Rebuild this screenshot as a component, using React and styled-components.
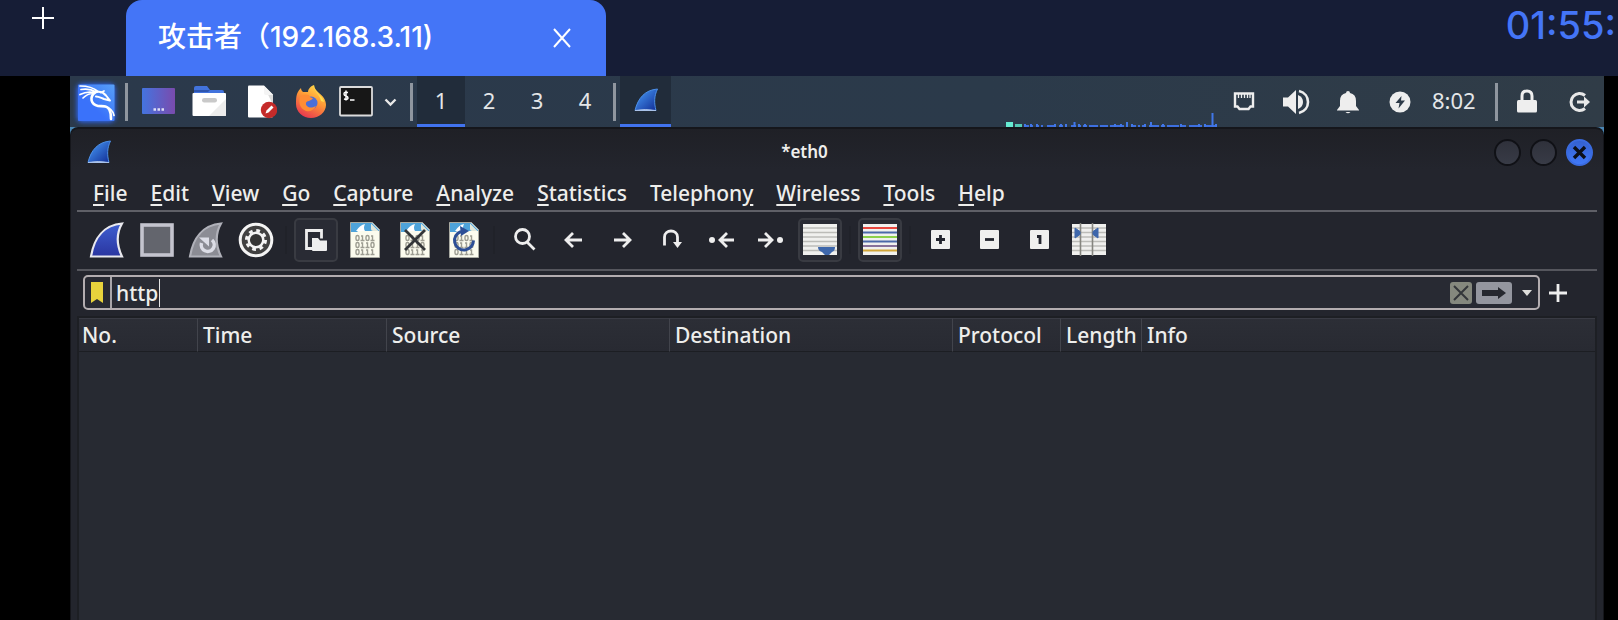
import React from "react";
import styled, { createGlobalStyle } from "styled-components";

const GlobalStyle = createGlobalStyle`
  * { box-sizing: border-box; }
  body { margin: 0; background: #000; overflow: hidden; }
  button { appearance: none; border: 0; padding: 0; margin: 0; background: none; color: inherit; font: inherit; }
  svg { display: block; flex: none; }
`;

const ui = `"Noto Sans", "Open Sans", sans-serif`;

const Page = styled.div`
  min-height: 100vh;
  display: flex;
  flex-direction: column;
  background: #000;
`;

/* Session bar */
const SessionBar = styled.header`
  height: 76px;
  display: flex;
  align-items: stretch;
  background: #161d36;
  font-family: Inter, "Noto Sans CJK SC", sans-serif;
  font-weight: 500;
  color: #fff;
`;
const AddSession = styled.button`
  width: 126px;
  padding: 6px 0 0 31px;
  display: flex;
  align-items: flex-start;
`;
const SessionTab = styled.div`
  width: 480px;
  display: flex;
  align-items: center;
  justify-content: space-between;
  padding: 0 34px 2px 32px;
  border-radius: 16px 16px 0 0;
  background: #4475f7;
  font-size: 28px;
  line-height: 40px;
  white-space: nowrap;
`;
const CloseTab = styled.button`
  padding-top: 2px;
`;
const Timer = styled.time`
  margin-left: auto;
  padding-right: 2px;
  font-size: 38px;
  line-height: 50px;
  color: #4475f7;
  white-space: nowrap;
`;

/* Remote desktop */
const Desktop = styled.main`
  flex: 1;
  display: flex;
  flex-direction: column;
  margin: 0 14px 0 70px;
  background: #4a86b4;
  font-family: ${ui};
`;
const Panel = styled.div`
  height: 51px;
  display: flex;
  align-items: stretch;
  background: linear-gradient(90deg, #2b394b, #2b3a4a 60%, #303c47);
  color: #e4e6e8;
`;
const PanelButton = styled.button`
  width: ${(p) => p.$w || 50}px;
  display: flex;
  align-items: center;
  justify-content: ${(p) => p.$align || "center"};
  font-size: 22px;
  line-height: 48px;
  background: ${(p) => (p.$active ? "#212c3a" : "none")};
  border-bottom: ${(p) => (p.$active ? "3px solid #4173ee" : "0")};
  padding-bottom: ${(p) => (p.$active || p.$flat ? 0 : 3)}px;
`;
const PanelRule = styled.span`
  width: 3px;
  margin: 7px 4px 6px;
  background: #8f969f;
`;
const Tray = styled.div`
  margin-left: auto;
  display: flex;
  align-items: stretch;
`;
const Load = styled.div`
  width: 212px;
  display: flex;
  align-items: flex-end;
`;
const Clock = styled.time`
  width: 65px;
  padding-left: 6px;
  font-size: 22px;
  line-height: 48px;
`;

/* Capture window */
const Window = styled.section`
  flex: 1;
  display: flex;
  flex-direction: column;
  padding: 0 6px;
  border: solid #15161b;
  border-width: 2px 1px 0;
  border-radius: 8px 8px 0 0;
  background: linear-gradient(#1f2026, #23252d 40px);
  color: #eeeeec;
`;
const TitleBar = styled.div`
  height: 46px;
  display: flex;
  align-items: center;
  padding: 0 4px 0 10px;
`;
const Title = styled.h1`
  flex: 1;
  margin: 0;
  padding-left: 4px;
  text-align: center;
  font-size: 17px;
  line-height: 24px;
  font-weight: 600;
`;
const Controls = styled.div`
  display: flex;
  gap: 9px;
`;
const Control = styled.button`
  width: 27px;
  height: 27px;
  display: flex;
  align-items: center;
  justify-content: center;
  border-radius: 50%;
  border: 2px solid ${(p) => (p.$close ? "#3a6bdf" : "#101116")};
  background: ${(p) => (p.$close ? "linear-gradient(#3561cf, #4079f8)" : "linear-gradient(#2f313b, #383b46)")};
`;
const MenuBar = styled.nav`
  height: 37px;
  display: flex;
  gap: 23px;
  padding: 0 16px;
  border-bottom: 2px solid #5f6067;
`;
const MenuItem = styled.button`
  font-size: 21px;
  line-height: 34px;
  font-weight: 500;
`;
const Mnemonic = styled.span`
  text-decoration: underline;
  text-decoration-thickness: 2px;
  text-underline-offset: 3px;
`;
const Toolbar = styled.div`
  height: 59px;
  display: flex;
  align-items: center;
  padding: 0 8px 2px;
  border-bottom: 2px solid #55565d;
`;
const ToolGroup = styled.div`
  width: ${(p) => p.$w}px;
  display: flex;
  justify-content: space-between;
`;
const ToolRule = styled.span`
  width: 2px;
  height: 28px;
  margin: 0 7px;
  background: #202229;
`;
const Tool = styled.button`
  width: 44px;
  height: 44px;
  display: flex;
  align-items: center;
  justify-content: center;
  border-radius: 5px;
  border: 2px solid ${(p) => (p.$on ? "#393b42" : "transparent")};
  background: ${(p) => (p.$on ? "#292b34" : "none")};
`;
const FilterRow = styled.form`
  display: flex;
  align-items: center;
  gap: 8px;
  padding: 4px 29px 6px 6px;
`;
const FilterBox = styled.div`
  flex: 1;
  height: 35px;
  display: flex;
  align-items: center;
  border: 2px solid #b3adb0;
  border-radius: 5px;
  background: #282a33;
`;
const Bookmark = styled.button`
  width: 27px;
  height: 31px;
  padding-right: 1px;
  display: flex;
  align-items: center;
  justify-content: center;
  border-right: 2px solid #a9a6aa;
`;
const FilterInput = styled.input`
  field-sizing: content;
  padding: 0 1px 0 4px;
  border: 0;
  outline: 0;
  background: none;
  color: #eeeeec;
  font: 500 21px/30px ${ui};
`;
const Caret = styled.span`
  width: 1px;
  height: 28px;
  background: #e6e6e6;
`;
const FilterActions = styled.div`
  margin-left: auto;
  display: flex;
  align-items: center;
  gap: 4px;
`;
const FilterButton = styled.button`
  width: ${(p) => p.$w}px;
  height: 22px;
  display: flex;
  align-items: center;
  justify-content: center;
  border-radius: 3px;
  background: ${(p) => p.$bg || "none"};
`;
const PacketPane = styled.div`
  flex: 1;
  border: 2px solid #1d1f24;
  border-bottom: 0;
  background: #272a32;
`;
const PacketTable = styled.table`
  width: 100%;
  table-layout: fixed;
  border-collapse: separate;
  border-spacing: 0;
`;
const Column = styled.col`
  width: ${(p) => (p.$w ? `${p.$w}px` : "auto")};
`;
const HeadCell = styled.th`
  height: 34px;
  padding: 0 0 0 ${(p) => (p.$first ? 3 : 5)}px;
  border-top: 1px solid #393b44;
  border-bottom: 1px solid #1c1e23;
  border-right: ${(p) => (p.$last ? "0" : "1px solid #42444c")};
  background: linear-gradient(#2c2e36, #282a32);
  text-align: left;
  font-size: 21px;
  line-height: 32px;
  font-weight: 500;
  white-space: nowrap;
`;

/* Icons */
const Kali = () => (
  <svg width="50" height="50" viewBox="0 0 50 50">
    <defs>
      <linearGradient id="kali" x1="0" y1="1" x2="1" y2="0"><stop offset=".4" stopColor="#3a72fa" /><stop offset="1" stopColor="#58a0f8" /></linearGradient>
      <filter id="glow" x="-30%" y="-30%" width="160%" height="160%"><feGaussianBlur stdDeviation="2.5" /></filter>
    </defs>
    <rect x="6" y="7" width="38" height="38" rx="5" fill="#2f6bff" filter="url(#glow)" />
    <rect x="7" y="7.500" width="36.500" height="36.500" rx="1" fill="url(#kali)" />
    <g fill="none" stroke="#fff" strokeLinecap="round" strokeLinejoin="round">
      <path d="M9 9c7 0 14 2 18 5.500M10 12.500c6-1 11 0 15 2.500M9 17.500c5-2.500 9-3 14-2M12 21c3-3 6-4.500 10-4.500" strokeWidth="1.700" />
      <path d="M24 15.500c-6 5-4 12 3 13.500 5 .5 9-1 11.500 4 1.500 3 1.500 6 1.500 9" strokeWidth="2.600" />
      <path d="M24 15.500c4-1.500 8-.5 11 3l4 5-6-1.500c-3-1-5-2.500-8-2.500" strokeWidth="2" />
      <path d="M30 15.500l3-1.500M34 29.500c4 1 8 4 9 9" strokeWidth="1.700" />
    </g>
  </svg>
);
const DesktopIcon = () => (
  <svg width="40" height="39" viewBox="-1 0 40 39">
    <defs><linearGradient id="desk"><stop stopColor="#4474e0" /><stop offset="1" stopColor="#7a4bad" /></linearGradient></defs>
    <rect x="4" y="6" width="33" height="26" rx="1" fill="url(#desk)" />
    <path d="M15.500 27.500h2.500M19.500 27.500h2.500M23.500 27.500h2.500" stroke="#dfe0f5" strokeWidth="2.500" />
  </svg>
);
const FolderIcon = () => (
  <svg width="40" height="39" viewBox="-1 1 40 39">
    <path d="M6 7q0-2 2-2h11l3 4h12q2 0 2 2v4H6z" fill="#4273dd" />
    <path d="M6 9h16l-2 2H6z" fill="#2e55ae" />
    <rect x="4.500" y="12" width="33.500" height="23" rx="1" fill="#fff" />
    <path d="M38 18v16q0 1-1 1H21z" fill="#ececec" />
    <rect x="14" y="17" width="15" height="4.500" rx="2.200" fill="#c9c9c9" />
  </svg>
);
const EditorIcon = () => (
  <svg width="40" height="39" viewBox="-1 0 40 39">
    <path d="M11 3.500h15l9 9V34q0 1.500-1.500 1.500H11q-1 0-1-1V4.500q0-1 1-1z" fill="#fff" />
    <path d="M26 4l9 9v10z" fill="#dadada" /><path d="M26 4l9 9h-7q-2 0-2-2z" fill="#f4f4f4" />
    <circle cx="31" cy="28" r="8.200" fill="#c52b2a" />
    <path d="M27.500 31.500l1-3 5-5 2 2-5 5z" fill="#fff" />
  </svg>
);
const FirefoxIcon = () => (
  <svg width="40" height="39" viewBox="-1 0 40 39">
    <defs>
      <linearGradient id="fox" x1=".8" y1="0" x2=".3" y2="1"><stop stopColor="#ffe14c" /><stop offset=".45" stopColor="#ff9a36" /><stop offset="1" stopColor="#e8364f" /></linearGradient>
    </defs>
    <path d="M9 12c1-3 3-5 4-6 0 2 1 3 2 4h5c0-3 3-6 6-7 0 3 2 5 5 8 4 3 7 7 7 12 0 7-7 13-15 13S8 30 8 22c0-4 0-7 1-10z" fill="url(#fox)" />
    <circle cx="23" cy="21" r="6.500" fill="#4a6fd8" />
    <path d="M12 15c3-3 6-3 9-2 0 2 2 3 4 3-1 2-3 2-4 3-3 0-4 3-2 5 3 3 7 1 9 0-2 4-6 6-10 5-5-2-8-7-6-14z" fill="#ff8d35" />
    <path d="M26 3c-1 6 6 9 7 16l3 1c0-5-10-9-10-17z" fill="#ffe04f" />
  </svg>
);
const TerminalIcon = () => (
  <svg width="40" height="39" viewBox="0 0 40 39">
    <rect x="3" y="5" width="32" height="28.500" rx="1" fill="#171717" stroke="#dcdcdc" strokeWidth="1.800" />
    <path d="M11 10.500q-4-1-4 1.500 0 1.500 2 2t2 2q0 2-4 1M9 8.500v10M13 18h4.500" fill="none" stroke="#fff" strokeWidth="1.500" />
  </svg>
);
const Chevron = () => (
  <svg width="16" height="16" viewBox="0 0 16 16"><path d="M3.500 5.500l5 5 5-5" fill="none" stroke="#e8e8e8" strokeWidth="2.400" /></svg>
);
const SmallFin = () => (
  <svg width="24" height="24" viewBox="0 0 24 24">
    <defs><linearGradient id="fin" x1="0" y1="0" x2="1" y2="1"><stop offset=".2" stopColor="#3f8ae8" /><stop offset="1" stopColor="#102a92" /></linearGradient></defs>
    <path d="M1 22.500C4 10 11 2 23.500 1 20 8 20 15 22 22.500z" fill="url(#fin)" stroke="#4c8fe6" />
    <path d="M1 22.500q10-2 21 0z" stroke="#a9c2ea" fill="#a9c2ea" />
  </svg>
);
const Network = () => (
  <svg width="24" height="24" viewBox="0 0 24 24"><path d="M3 3.500h18v13h-2.500l-2 2.500h-9l-2-2.500H3z" fill="none" stroke="#eee" strokeWidth="2.400" /><path d="M6.500 4v4M9.500 4v4M12.500 4v4M15.500 4v4M18 4v4" stroke="#eee" strokeWidth="1.300" /></svg>
);
const Volume = () => (
  <svg width="28" height="26" viewBox="0 0 28 26"><path d="M1 8.500h5l8-7.500v24l-8-7.500H1z" fill="#eee" /><path d="M16 6q5 2 5 7t-5 7z" fill="#eee" /><path d="M17 2c12 3 12 19 0 22" fill="none" stroke="#eee" strokeWidth="2.600" /></svg>
);
const Bell = () => (
  <svg width="24" height="26" viewBox="0 0 24 26"><path d="M12 2q2 0 2 2 6 1 6 8v5l3 4v.5H1V21l3-4v-5q0-7 6-8 0-2 2-2zM9.500 23h5q-2.500 2.500-5 0z" fill="#eee" /></svg>
);
const Power = () => (
  <svg width="24" height="24" viewBox="0 0 24 24"><circle cx="12" cy="12" r="10.500" fill="#eee" /><path d="M13.500 6l-6 7h4l-1 5.500 6.500-8h-4z" fill="#2d3a48" /></svg>
);
const Lock = () => (
  <svg width="24" height="26" viewBox="1 1 24 26"><rect x="2" y="12" width="20" height="12.500" rx="1.500" fill="#eee" /><path d="M7 13V8q0-5 5-5t5 5v5" fill="none" stroke="#eee" strokeWidth="3" /></svg>
);
const Logout = () => (
  <svg width="24" height="24" viewBox="0 0 24 24"><path d="M18 5.500a8.500 8.500 0 1 0 0 13" fill="none" stroke="#e8e8e8" strokeWidth="3" /><path d="M10 12h8" stroke="#e8e8e8" strokeWidth="3" /><path d="M17 6.500l6 5.500-6 5.500z" fill="#e8e8e8" /></svg>
);
const LoadGraph = () => (
  <svg width="212" height="18" viewBox="0 0 212 18">
    <path d="M0 13h7v5H0z" fill="#66ebd2" /><path d="M9 15h7v3H9z" fill="#54c9b4" />
    <path d="M19 17h4M25 17h2M30 17h3M35 17h2M41 17h9M53 17h4M59 17h2M65 17h5M72 17h3M77 17h4M83 17h9M94 17h8M104 17h14M120 17h2M126 17h4M132 17h2M136 17h4M143 17h10M155 17h4M161 17h12M175 17h5M183 17h13M198 17h12" stroke="#3d6fe0" strokeWidth="2" />
    <path d="M19 15v3M25 15v3M31 15v3M49 15v3M55 15v3M60 15v3M68.500 13v5M73 15v3M79 15v3M109 15v3M115 15v3M121 13v5M126 15v3M139 15v3M145 13v5M157 15v3M175 15v3M193 15v3M199 15v3M206.500 4v14M210 15v3" stroke="#4177e8" strokeWidth="2" />
  </svg>
);
const Fin = ({ restart }) => (
  <svg width="38" height="40" viewBox="0 0 38 40">
    <defs><linearGradient id="bigfin" x1="0" y1="0" x2="0" y2="1"><stop stopColor="#3f5fd0" /><stop offset="1" stopColor="#2a35a0" /></linearGradient></defs>
    <path d="M3 36.500C6 18 16 5 34 3.500 28 14 29 26 34 36.500z" fill={restart ? "#8b8c94" : "url(#bigfin)"} stroke={restart ? "#b0b1b9" : "#e9e9ee"} strokeWidth="2.200" />
    {restart && (
      <g fill="none" stroke="#dcdde6" strokeWidth="3.500"><path d="M25 20a6.500 6.500 0 1 1-10.500 3" /><path d="M12 17.500h10v9z" fill="#dcdde6" stroke="none" /></g>
    )}
  </svg>
);
const Stop = () => (
  <svg width="36" height="36" viewBox="0 0 36 36"><rect x="3" y="3" width="30" height="30" fill="#63656d" stroke="#c4c4ce" strokeWidth="3.600" /></svg>
);
const Options = () => (
  <svg width="36" height="36" viewBox="0 0 36 36">
    <circle cx="18" cy="18" r="15.800" fill="#414141" stroke="#f4f4f4" strokeWidth="3" />
    <circle cx="18" cy="18" r="9.500" fill="none" stroke="#f4f4f4" strokeWidth="3" strokeDasharray="3.730 3.730" />
    <circle cx="18" cy="18" r="7.300" fill="#353535" stroke="#f4f4f4" strokeWidth="2.500" />
  </svg>
);
const OpenFile = () => (
  <svg width="24" height="24" viewBox="0 0 24 24"><path d="M8.500 20.500h-6v-18h15v8" fill="none" stroke="#eee" strokeWidth="2.800" /><path d="M8 10h6l2 2.500h7V22q0 1-1 1H9q-1 0-1-1z" fill="#eee" /></svg>
);
const bits = ["0101", "0110", "0111"];
const Sheet = ({ mark }) => (
  <svg width="32" height="38" viewBox="0 0 32 38">
    <path d="M1.500 1.500h22l7 7v28h-29z" fill="#fbfbee" stroke="#a9aaa2" />
    <path d="M2 2h21l7 7v1H15l-3-3-4 4H2z" fill="#4ea3da" />
    <path d="M7 10q4-6 9-7-2 4 0 7z" fill="#fff" /><path d="M22 2.500l7.500 7.500H24q-2 0-2-2z" fill="#e2e7da" />
    {bits.map((row, r) =>
      [...row].map((bit, c) =>
        bit === "0" ? (
          <rect key={c} x={7 + c * 5} y={14.500 + r * 7} width="3" height="5" rx="1.500" fill="none" stroke="#9d9d92" strokeWidth="1.400" />
        ) : (
          <path key={c} d={`M${7 + c * 5} ${15 + r * 7}h1.500v4M${6.500 + c * 5} ${19.500 + r * 7}h4`} fill="none" stroke="#9d9d92" strokeWidth="1.400" />
        )
      )
    )}
    {mark === "close" && <path d="M6 9l20 20M26 9L6 29" stroke="#333639" strokeWidth="2.800" />}
    {mark === "reload" && (
      <g><path d="M13 10.500a9.500 9.500 0 1 0 12.500 9" fill="none" stroke="#2d4f96" strokeWidth="3" /><path d="M12 5l9 5-8 5z" fill="#2d4f96" /></g>
    )}
  </svg>
);
const lineIcons = {
  find: { d: "M18.500 9.500a7 7 0 1 1-14 0 7 7 0 0 1 14 0zM16 15l7.500 7.500" },
  back: { d: "M22 13H6M13 6l-7 7 7 7" },
  forward: { d: "M4 13h16M13 6l7 7-7 7" },
  jump: { d: "M5.500 18.500V10c0-8 13-8 13 0v8", fill: "M14 15h9l-4.500 6z" },
  first: { d: "M26 13H12M19 6l-7 7 7 7", fill: "M1 13a3 3 0 1 1 6 0 3 3 0 0 1-6 0" },
  last: { d: "M0 13h13M7 6l7 7-7 7", fill: "M19 13a3 3 0 1 1 6 0 3 3 0 0 1-6 0" },
};
const LineIcon = ({ name }) => (
  <svg width="26" height="26" viewBox="0 0 26 26">
    <path d={lineIcons[name].d} fill="none" stroke="#eee" strokeWidth="2.800" />
    {lineIcons[name].fill && <path d={lineIcons[name].fill} fill="#eee" />}
  </svg>
);
const Lines = ({ kind }) => {
  const colours = kind === "colour" ? ["#e8473f", "#4a68a8", "#8cd04a", "#4a68a8", "#87719a", "#d0a53a"] : Array(6).fill("#bcbcb8");
  return (
    <svg width="36" height="36" viewBox="0 0 36 36">
      <rect x="1" y="2" width="34" height="31" fill="#f0f0ee" />
      {colours.map((c, i) => (
        <path key={i} d={`M1 ${6 + i * 4.500}h34`} stroke={c} strokeWidth={kind === "colour" ? 2 : 1.600} />
      ))}
      {kind === "scroll" && <path d="M16 25h17q0 4-3 5l-3 3h-4l-3-3q-4-1-4-5z" fill="#3e67ab" />}
      {kind === "resize" && (
        <g><path d="M9.500 1v33M21.500 1v33" stroke="#85857f" strokeWidth="1.600" /><path d="M4 6l5 3.500v3L4 16zM27 6l-5 3.500v3l5 3.500z" fill="#3e67ab" stroke="#3e67ab" /></g>
      )}
    </svg>
  );
};
const zooms = { in: "M5 9.500h9M9.500 5v9", out: "M5 9.500h9", normal: "M7 6.500h3V14" };
const Zoom = ({ kind }) => (
  <svg width="19" height="19" viewBox="0 0 19 19"><rect width="19" height="19" rx="1" fill="#f0f0ee" /><path d={zooms[kind]} fill="none" stroke="#23252d" strokeWidth="2.800" /></svg>
);

const launchers = [
  ["Show desktop", DesktopIcon],
  ["File manager", FolderIcon],
  ["Text editor", EditorIcon],
  ["Firefox", FirefoxIcon],
  ["Terminal", TerminalIcon],
];
const trayIcons = [["Network", Network], ["Volume", Volume], ["Notifications", Bell], ["Power", Power]];
const menus = [
  ["", "F", "ile"], ["", "E", "dit"], ["", "V", "iew"], ["", "G", "o"], ["", "C", "apture"], ["", "A", "nalyze"],
  ["", "S", "tatistics"], ["Telephon", "y", ""], ["", "W", "ireless"], ["", "T", "ools"], ["", "H", "elp"],
];
const toolGroups = [
  { w: 193, tools: [["Start capture", <Fin />], ["Stop capture", <Stop />], ["Restart capture", <Fin restart />], ["Capture options", <Options />]] },
  { w: 192, tools: [["Open", <OpenFile />, true], ["Save", <Sheet />], ["Close file", <Sheet mark="close" />], ["Reload", <Sheet mark="reload" />]] },
  {
    w: 340,
    tools: [
      ["Find packet", <LineIcon name="find" />], ["Previous packet", <LineIcon name="back" />], ["Next packet", <LineIcon name="forward" />],
      ["Go to packet", <LineIcon name="jump" />], ["First packet", <LineIcon name="first" />], ["Last packet", <LineIcon name="last" />],
      ["Auto scroll", <Lines kind="scroll" />, true],
    ],
  },
  { w: 44, tools: [["Colorize", <Lines kind="colour" />, true]] },
  { w: 193, tools: [["Zoom in", <Zoom kind="in" />], ["Zoom out", <Zoom kind="out" />], ["Normal size", <Zoom kind="normal" />], ["Resize columns", <Lines kind="resize" />]] },
];
const columns = [["No.", 119], ["Time", 189], ["Source", 283], ["Destination", 283], ["Protocol", 108], ["Length", 81], ["Info", 0]];

export default function App() {
  const [filter, setFilter] = React.useState("http");
  return (
    <Page>
      <GlobalStyle />
      <SessionBar>
        <AddSession aria-label="New session">
          <svg width="24" height="24" viewBox="0 0 24 24"><path d="M1 12h22M12 1v22" stroke="#fff" strokeWidth="2" /></svg>
        </AddSession>
        <SessionTab>
          <span>攻击者（192.168.3.11)</span>
          <CloseTab aria-label="Close session">
            <svg width="20" height="20" viewBox="0 0 20 20"><path d="M2 1l16 18M18 1L2 19" stroke="#fff" strokeWidth="2" /></svg>
          </CloseTab>
        </SessionTab>
        <Timer>01:55:</Timer>
      </SessionBar>

      <Desktop>
        <Panel>
          <PanelButton $w={51} $flat aria-label="Applications"><Kali /></PanelButton>
          <PanelRule />
          {launchers.map(([name, Icon]) => (
            <PanelButton key={name} $flat aria-label={name}><Icon /></PanelButton>
          ))}
          <PanelButton $w={24} $flat $align="flex-start" aria-label="More terminals"><Chevron /></PanelButton>
          <PanelRule />
          {[1, 2, 3, 4].map((n) => (
            <PanelButton key={n} $w={48} $active={n === 1}>{n}</PanelButton>
          ))}
          <PanelRule />
          <PanelButton $w={51} $active aria-label="Wireshark"><SmallFin /></PanelButton>
          <Tray>
            <Load><LoadGraph /></Load>
            {trayIcons.map(([name, Icon]) => (
              <PanelButton key={name} $w={52} $flat aria-label={name}><Icon /></PanelButton>
            ))}
            <Clock>8:02</Clock>
            <PanelRule />
            <PanelButton $w={52} $flat aria-label="Lock screen"><Lock /></PanelButton>
            <PanelButton $flat aria-label="Log out"><Logout /></PanelButton>
          </Tray>
        </Panel>

        <Window>
          <TitleBar>
            <SmallFin />
            <Title>*eth0</Title>
            <Controls>
              <Control aria-label="Minimize" />
              <Control aria-label="Maximize" />
              <Control $close aria-label="Close">
                <svg width="15" height="15" viewBox="0 0 15 15"><path d="M2 2l11 11M13 2L2 13" stroke="#0c0f18" strokeWidth="3.400" /></svg>
              </Control>
            </Controls>
          </TitleBar>
          <MenuBar>
            {menus.map(([before, key, after]) => (
              <MenuItem key={before + key + after}>{before}<Mnemonic>{key}</Mnemonic>{after}</MenuItem>
            ))}
          </MenuBar>
          <Toolbar>
            {toolGroups.map((group, i) => (
              <React.Fragment key={i}>
                {i > 0 && <ToolRule />}
                <ToolGroup $w={group.w}>
                  {group.tools.map(([name, icon, on]) => (
                    <Tool key={name} type="button" $on={on} aria-label={name}>{icon}</Tool>
                  ))}
                </ToolGroup>
              </React.Fragment>
            ))}
          </Toolbar>
          <FilterRow onSubmit={(e) => e.preventDefault()}>
            <FilterBox>
              <Bookmark type="button" aria-label="Saved filters">
                <svg width="14" height="22" viewBox="0 0 14 22"><path d="M1 0h12v21l-6-4-6 4z" fill="#e8d33c" /></svg>
              </Bookmark>
              <FilterInput aria-label="Display filter" value={filter} onChange={(e) => setFilter(e.target.value)} />
              <Caret />
              <FilterActions>
                <FilterButton type="button" $w={22} $bg="#85887e" aria-label="Clear filter">
                  <svg width="16" height="16" viewBox="0 0 16 16"><path d="M1 1l14 14M15 1L1 15" stroke="#33363a" strokeWidth="2" /></svg>
                </FilterButton>
                <FilterButton type="button" $w={36} $bg="#94969f" aria-label="Apply filter">
                  <svg width="26" height="14" viewBox="0 0 26 14"><path d="M1 4h16V1l8 6-8 6v-3H1z" fill="#26282f" /></svg>
                </FilterButton>
                <FilterButton type="button" $w={22} aria-label="Recent filters">
                  <svg width="12" height="8" viewBox="0 0 12 8"><path d="M1 1h10L6 7z" fill="#dededb" /></svg>
                </FilterButton>
              </FilterActions>
            </FilterBox>
            <FilterButton type="button" $w={20} aria-label="Add filter button">
              <svg width="20" height="20" viewBox="0 0 20 20"><path d="M1 10h18M10 1v18" stroke="#eee" strokeWidth="2.800" /></svg>
            </FilterButton>
          </FilterRow>
          <PacketPane>
            <PacketTable>
              <colgroup>{columns.map(([name, w]) => <Column key={name} $w={w} />)}</colgroup>
              <thead>
                <tr>
                  {columns.map(([name], i) => (
                    <HeadCell key={name} scope="col" $first={i === 0} $last={i === columns.length - 1}>{name}</HeadCell>
                  ))}
                </tr>
              </thead>
            </PacketTable>
          </PacketPane>
        </Window>
      </Desktop>
    </Page>
  );
}
